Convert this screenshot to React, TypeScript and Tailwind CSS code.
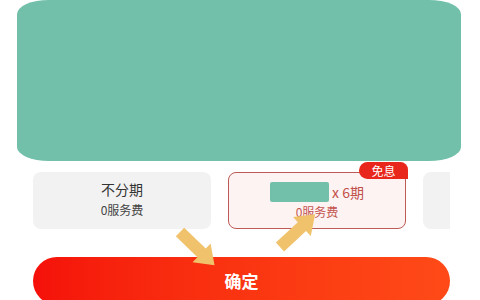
import React from "react";

const font = { fontFamily: '"Noto Sans CJK SC", "Noto Sans", sans-serif' };

function Arrow({ x, y, angle }: { x: number; y: number; angle: number }) {
  return (
    <polygon
      points="0,-6 30,-6 30,-13 48,0 30,13 30,6 0,6"
      fill="#f0c26c"
      transform={`translate(${x} ${y}) rotate(${angle})`}
    />
  );
}

export default function App() {
  return (
    <div className="relative w-[480px] h-[300px] overflow-hidden bg-white" style={font}>
      {/* 顶部区域 */}
      <div className="ml-[17px] w-[444px] h-[161px] bg-[#72c0aa] rounded-[32px/14px]" />

      {/* 分期选项 */}
      <div className="mt-[11px] ml-[33px] w-[417px] overflow-hidden">
        <div className="flex gap-[17px] pt-0">
          <div className="w-[178px] h-[57px] shrink-0 rounded-[8px] bg-[#f2f2f2] flex flex-col items-center pt-[7px]">
            <div className="text-[14px] leading-[20px] text-[#333]">不分期</div>
            <div className="text-[12px] leading-[16px] mt-[3px] text-[#444]">0服务费</div>
          </div>

          <div className="relative w-[178px] h-[57px] shrink-0 rounded-[8px] bg-[#fdf3f3] border-[1.5px] border-[#bd5a55] flex flex-col items-center pt-[9px]">
            <div className="flex items-center gap-[3px]">
              <div className="w-[59px] h-[20px] rounded-[2px] bg-[#72c0aa]" />
              <span className="text-[14px] leading-[20px] text-[#c24f48]">x 6期</span>
            </div>
            <div className="text-[12px] leading-[16px] mt-[2px] text-[#c45550]">0服务费</div>
          </div>

          <div className="w-[178px] h-[57px] shrink-0 rounded-[8px] bg-[#f2f2f2]" />
        </div>
      </div>

      {/* 免息 角标 */}
      <div className="absolute left-[359px] top-[162px] w-[49px] h-[17px] bg-[#e8261b] rounded-tl-[10px] rounded-bl-[10px] rounded-tr-[9px] flex items-center justify-center text-white text-[12px] leading-none">
        免息
      </div>

      {/* 确定 按钮 */}
      <div className="mt-[28px] ml-[33px] w-[417px] h-[48px] rounded-full bg-gradient-to-r from-[#f5100a] to-[#ff4a17] flex items-center justify-center">
        <span className="text-white text-[17px] font-bold">确定</span>
      </div>

      {/* 箭头 */}
      <svg className="absolute inset-0 pointer-events-none" width="480" height="300" viewBox="0 0 480 300">
        <Arrow x={180} y={232} angle={44} />
        <Arrow x={280} y={247} angle={-43} />
      </svg>
    </div>
  );
}
